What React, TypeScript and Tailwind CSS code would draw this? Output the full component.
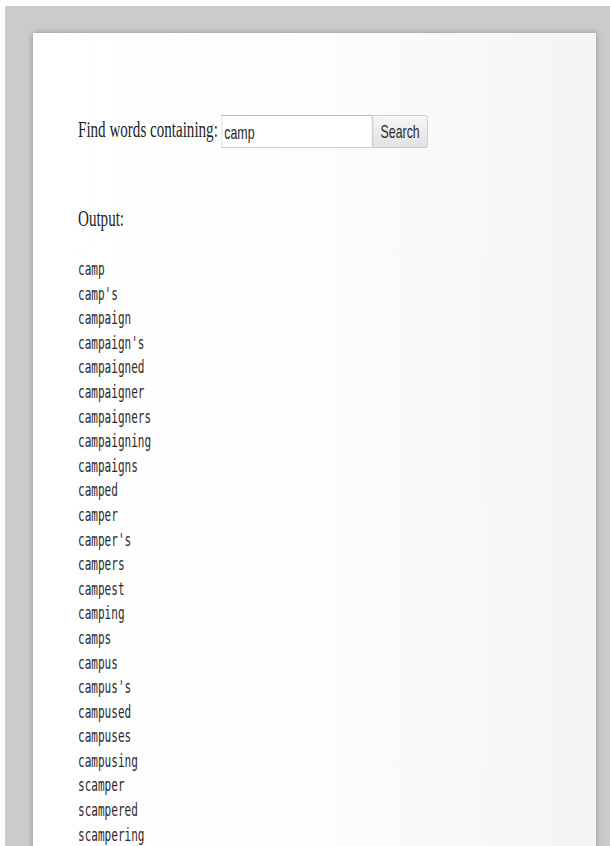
import React from "react";

const words = [
  "camp",
  "camp's",
  "campaign",
  "campaign's",
  "campaigned",
  "campaigner",
  "campaigners",
  "campaigning",
  "campaigns",
  "camped",
  "camper",
  "camper's",
  "campers",
  "campest",
  "camping",
  "camps",
  "campus",
  "campus's",
  "campused",
  "campuses",
  "campusing",
  "scamper",
  "scampered",
  "scampering",
];

export default function App() {
  return (
    <div className="min-h-screen bg-white pl-[5px] pt-[6px]">
      <div className="min-h-[840px] bg-[#cbcbcb] pl-[28px] pr-[14px] pt-[27px]">
        <div className="min-h-[900px] bg-gradient-to-r from-white via-[#fdfdfd] to-[#f4f4f4] pl-[45px] pt-[82px] pb-10 shadow-[0_0_6px_rgba(0,0,0,0.28)]">
          <div className="origin-left scale-x-[0.65]">
            <form
              className="flex items-start gap-[6px]"
              onSubmit={(e) => e.preventDefault()}
            >
              <label className="whitespace-nowrap font-['Liberation_Serif',serif] text-[23.2px] leading-[28px] text-[#1e1e1e]">
                Find words containing:
              </label>
              <div className="flex">
                <input
                  type="text"
                  defaultValue="camp"
                  className="h-[33px] w-[232px] border border-[#cfcfcf] border-t-[#bdbdbd] bg-white px-[3px] pt-[2px] font-['Liberation_Sans',sans-serif] text-[19px] text-[#1e1e1e] outline-none"
                />
                <button
                  type="submit"
                  className="h-[33px] w-[85px] rounded-[2px] border border-[#c2c2c2] bg-gradient-to-b from-[#f7f7f7] to-[#e2e2e2] pt-[2px] font-['Liberation_Sans',sans-serif] text-[19px] text-[#2a2a2a]"
                >
                  Search
                </button>
              </div>
            </form>

            <p className="mt-[56px] font-['Liberation_Serif',serif] text-[23.2px] leading-[28px] text-[#1e1e1e]">
              Output:
            </p>

            <pre className="mt-[25px] font-['DejaVu_Sans_Mono',monospace] text-[17px] leading-[24.6px] text-[#2a2a2a]">
              {words.join("\n")}
            </pre>
          </div>
        </div>
      </div>
    </div>
  );
}
